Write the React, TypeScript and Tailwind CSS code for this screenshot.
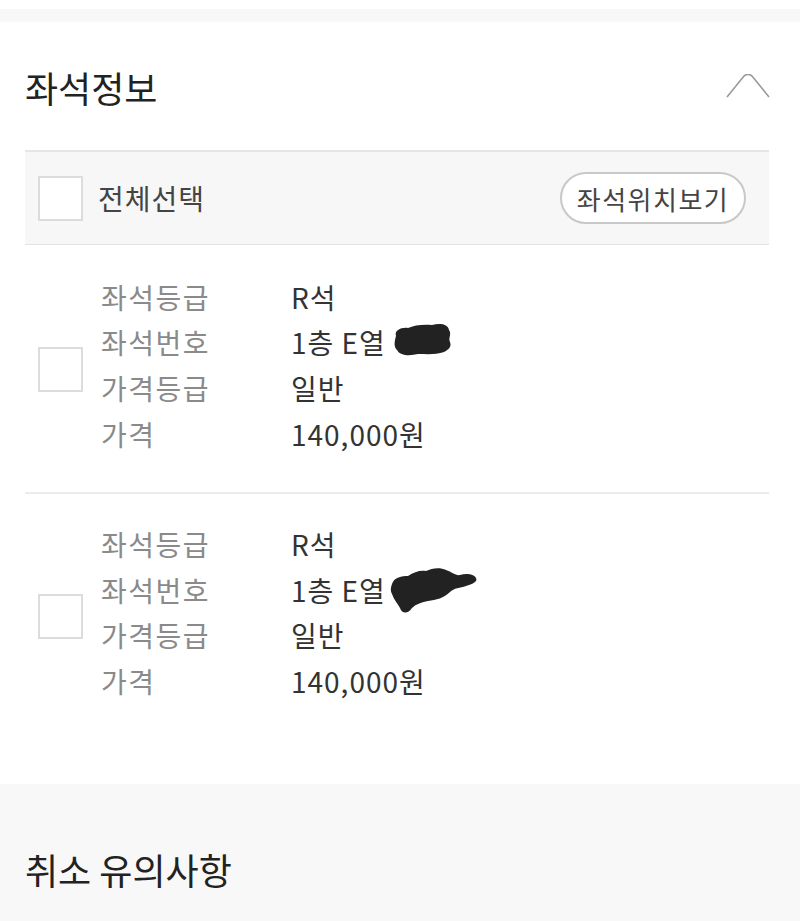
import React from "react";

const font = { fontFamily: '"Noto Sans CJK KR", "Noto Sans", sans-serif' };

function Box() {
  return <div className="w-[45px] h-[45px] border-2 border-[#dcdcdc] bg-white shrink-0" />;
}

function Blob1() {
  return (
    <svg width="62" height="40" viewBox="0 0 62 40" className="ml-[6px]">
      <path
        d="M4 14 C2 8 10 5 16 6 C22 3 32 2 40 3 C48 1 56 2 57 8 C60 12 56 16 58 20 C60 25 56 28 52 30 C44 33 34 32 26 32 C18 34 8 34 5 28 C1 24 3 18 4 14 Z"
        fill="#222"
      />
    </svg>
  );
}

function Blob2() {
  return (
    <svg width="92" height="52" viewBox="0 0 92 52" className="ml-[2px]">
      <path
        d="M4 20 C6 13 14 12 20 12 C26 8 32 6 38 7 C44 4 52 3 58 6 C64 8 68 12 72 11 C78 9 86 10 88 14 C90 18 84 20 78 22 C72 24 66 24 62 28 C56 34 48 36 40 37 C34 38 28 40 24 44 C20 50 14 50 12 44 C10 40 6 36 4 30 C2 26 3 23 4 20 Z"
        fill="#222"
      />
    </svg>
  );
}

function Row({ label, value }: { label: string; value: React.ReactNode }) {
  return (
    <div className="flex items-center h-[45.6px]">
      <div className="w-[190px] text-[28px] tracking-[1.5px] text-[#8a8a8a]">{label}</div>
      <div className="flex items-center text-[28px] tracking-[1px] text-[#333]">{value}</div>
    </div>
  );
}

function Item({ blob }: { blob: React.ReactNode }) {
  return (
    <div className="flex items-center pl-[13px]">
      <div className="mt-[8px]">
        <Box />
      </div>
      <div className="ml-[18px]">
        <Row label="좌석등급" value="R석" />
        <Row
          label="좌석번호"
          value={
            <>
              <span>1층 E열</span>
              {blob}
            </>
          }
        />
        <Row label="가격등급" value="일반" />
        <Row label="가격" value="140,000원" />
      </div>
    </div>
  );
}

export default function App() {
  return (
    <div className="w-[800px] h-[921px] bg-white overflow-hidden" style={font}>
      <div className="h-[9px] bg-white" />
      <div className="h-[13px] bg-[#f8f8f8]" />
      <div className="px-[25px] pr-[31px]">
        <div className="h-[128px] flex items-center justify-between">
          <h2 className="text-[36px] text-[#222] mt-[2px]">좌석정보</h2>
          <svg width="44" height="24" viewBox="0 0 44 24" className="-mr-[1px]">
            <path d="M1 23 L18 2 Q22 -1 26 2 L43 23" fill="none" stroke="#999" strokeWidth="1.6" />
          </svg>
        </div>
      </div>
      <div className="mx-[25px] mr-[31px]">
        <div className="h-[95px] bg-[#f7f7f7] border-t-2 border-t-[#e6e6e6] border-b border-b-[#e3e3e3] flex items-center justify-between pl-[13px] pr-[23px]">
          <div className="flex items-center">
            <Box />
            <span className="ml-[15px] text-[28px] text-[#444] tracking-[1px]">전체선택</span>
          </div>
          <button className="h-[52px] w-[186px] rounded-full border-2 border-[#c8c8c8] bg-white text-[26px] text-[#444] tracking-[1.5px]">
            좌석위치보기
          </button>
        </div>
        <div className="pt-[29px] pb-[36px]">
          <Item blob={<Blob1 />} />
        </div>
        <div className="h-[2px] bg-[#ececec]" />
        <div className="pt-[27px]">
          <Item blob={<Blob2 />} />
        </div>
      </div>
      <div className="mt-[80px] bg-[#f8f8f8] h-[200px] px-[25px] pt-[58px]">
        <h2 className="text-[36px] text-[#222]">취소 유의사항</h2>
      </div>
    </div>
  );
}
